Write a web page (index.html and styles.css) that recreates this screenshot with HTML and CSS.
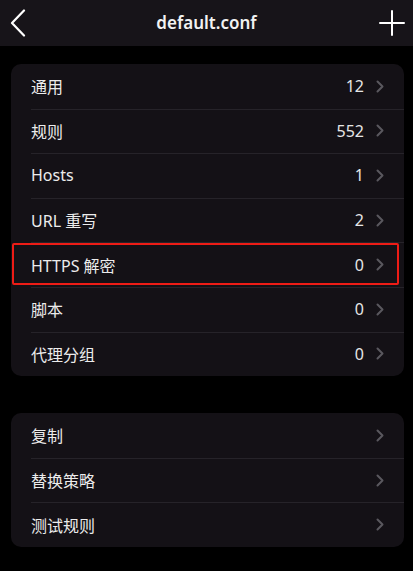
FILE: index.html
```html
<!DOCTYPE html>
<html lang="zh">
<head>
<meta charset="utf-8">
<link rel="stylesheet" href="styles.css">
</head>
<body>
<header class="nav">
  <svg class="nav-back" width="16" height="28" viewBox="0 0 16 28"><path d="M14 1.5 L2 14 L14 26.5" fill="none" stroke="#fff" stroke-width="2.2" stroke-linecap="round" stroke-linejoin="round"/></svg>
  <div class="nav-title">default.conf</div>
  <svg class="nav-plus" width="26" height="26" viewBox="0 0 26 26"><path d="M13 1 V25 M1 13 H25" fill="none" stroke="#fff" stroke-width="2" stroke-linecap="round"/></svg>
</header>
<main class="content">
  <section class="card">
    <div class="row"><span class="label">通用</span><span class="value">12</span><svg class="chev" viewBox="0 0 8 13"><path d="M1.5 1.5 L6.5 6.5 L1.5 11.5"/></svg></div>
    <div class="row"><span class="label">规则</span><span class="value">552</span><svg class="chev" viewBox="0 0 8 13"><path d="M1.5 1.5 L6.5 6.5 L1.5 11.5"/></svg></div>
    <div class="row"><span class="label">Hosts</span><span class="value">1</span><svg class="chev" viewBox="0 0 8 13"><path d="M1.5 1.5 L6.5 6.5 L1.5 11.5"/></svg></div>
    <div class="row"><span class="label">URL 重写</span><span class="value">2</span><svg class="chev" viewBox="0 0 8 13"><path d="M1.5 1.5 L6.5 6.5 L1.5 11.5"/></svg></div>
    <div class="row highlighted"><span class="label">HTTPS 解密</span><span class="value">0</span><svg class="chev" viewBox="0 0 8 13"><path d="M1.5 1.5 L6.5 6.5 L1.5 11.5"/></svg></div>
    <div class="row"><span class="label">脚本</span><span class="value">0</span><svg class="chev" viewBox="0 0 8 13"><path d="M1.5 1.5 L6.5 6.5 L1.5 11.5"/></svg></div>
    <div class="row"><span class="label">代理分组</span><span class="value">0</span><svg class="chev" viewBox="0 0 8 13"><path d="M1.5 1.5 L6.5 6.5 L1.5 11.5"/></svg></div>
  </section>
  <section class="card">
    <div class="row"><span class="label">复制</span><svg class="chev" viewBox="0 0 8 13"><path d="M1.5 1.5 L6.5 6.5 L1.5 11.5"/></svg></div>
    <div class="row"><span class="label">替换策略</span><svg class="chev" viewBox="0 0 8 13"><path d="M1.5 1.5 L6.5 6.5 L1.5 11.5"/></svg></div>
    <div class="row"><span class="label">测试规则</span><svg class="chev" viewBox="0 0 8 13"><path d="M1.5 1.5 L6.5 6.5 L1.5 11.5"/></svg></div>
  </section>
</main>
</body>
</html>
```
FILE: styles.css
```css
* { box-sizing: border-box; }
html, body { margin: 0; padding: 0; background: #000; }
body {
  width: 413px;
  height: 571px;
  overflow: hidden;
  font-family: "Noto Sans", "Noto Sans CJK SC", sans-serif;
  color: #ececec;
}
.nav {
  height: 46px;
  background: #171419;
  display: flex;
  align-items: center;
  justify-content: space-between;
  padding: 0 8px 0 10px;
  position: relative;
}
.nav-title {
  position: absolute;
  left: 0; right: 0;
  text-align: center;
  font-size: 17px;
  font-weight: 600;
  color: #f2f2f2;
  line-height: 46px;
  pointer-events: none;
}
.content {
  padding: 18px 9px 0 11px;
  display: flex;
  flex-direction: column;
  gap: 37px;
}
.card {
  background: #141116;
  border-radius: 10px;
  overflow: hidden;
}
.row {
  height: 44.6px;
  display: flex;
  align-items: center;
  padding: 0 20px 0 20px;
  position: relative;
  font-size: 16px;
}
.row + .row::before {
  content: "";
  position: absolute;
  top: 0; left: 20px; right: 0;
  height: 1px;
  background: #262329;
}
.row.highlighted::after {
  content: "";
  position: absolute;
  left: 1px; right: 5px; top: 1px; bottom: 2px;
  border: 2.5px solid #ee1c16;
  border-radius: 2px;
}
.label { flex: 1; }
.value { margin-right: 12px; color: #e6e6e6; }
.chev {
  width: 8px;
  height: 13px;
  fill: none;
  stroke: #5a585e;
  stroke-width: 2;
  stroke-linecap: round;
  stroke-linejoin: round;
}
```
